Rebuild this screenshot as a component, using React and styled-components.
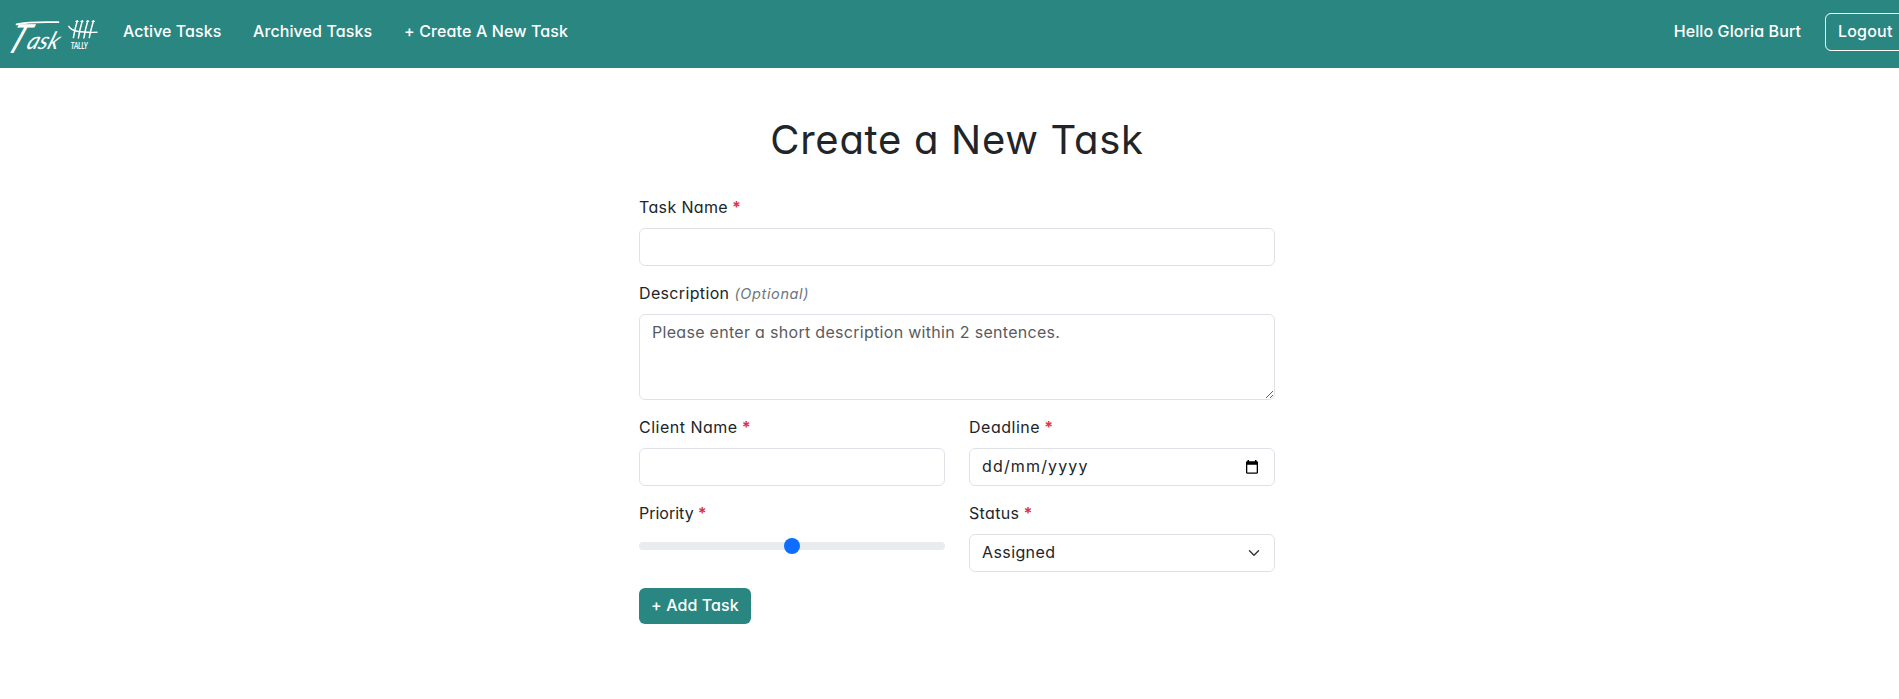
import React from 'react';
import styled, { createGlobalStyle } from 'styled-components';

const teal = '#2a8680';

const GlobalStyle = createGlobalStyle`
  *, *::before, *::after { box-sizing: border-box; }
  html, body { margin: 0; overflow: hidden; background: #fff; }
  body, input, textarea, select, button {
    font-family: Inter, "Open Sans", sans-serif;
    font-size: 16px;
    line-height: 24px;
    font-feature-settings: 'cv11' 1;
    color: #212529;
  }
`;

const Page = styled.div`
  width: 1914px;
  height: 699px;
`;

const Navbar = styled.nav`
  display: flex;
  align-items: flex-start;
  height: 68px;
  padding-right: 8px;
  background: ${teal};
`;

const Brand = styled.a`
  display: flex;
  width: 123px;
  svg { display: block; }
`;

const NavLinks = styled.div`
  display: flex;
  flex: 1;
  padding-top: 19px;
`;

const NavLink = styled.a`
  width: ${p => p.$width}px;
  color: #fff;
  font-weight: 500;
  letter-spacing: ${p => p.$track}px;
  white-space: nowrap;
`;

const Greeting = styled.span`
  padding-top: 19px;
  color: #fff;
  font-weight: 500;
  letter-spacing: 0.1px;
  margin-right: 24px;
`;

const LogoutButton = styled.button`
  width: 81px;
  height: 38px;
  margin-top: 13px;
  padding: 5px 12px 7px;
  border: 1px solid #fff;
  border-radius: 6px;
  background: transparent;
  color: #fff;
  font-weight: 500;
  letter-spacing: 0.2px;
  text-align: left;
`;

const Form = styled.form`
  width: 636px;
  margin: 0 auto;
  padding-top: 48px;
`;

const Title = styled.h1`
  margin: 0 0 32px;
  font-size: 40px;
  line-height: 48px;
  font-weight: 400;
  letter-spacing: 0.7px;
  text-align: center;
  white-space: nowrap;
`;

const Group = styled.div`
  display: flex;
  flex-direction: column;
  margin-bottom: 16px;
`;

const Columns = styled.div`
  display: grid;
  grid-template-columns: 1fr 1fr;
  column-gap: 24px;
`;

const Label = styled.label`
  display: flex;
  height: 24px;
  line-height: 22px;
  margin-bottom: 8px;
  letter-spacing: ${p => p.$track}px;
  white-space: nowrap;
`;

const Required = styled.span`
  margin-left: 4px;
  color: #dc3545;
  font-weight: 700;
  letter-spacing: 0;
`;

const Optional = styled.em`
  margin-left: 5px;
  color: #6c757d;
  font-size: 14.5px;
  line-height: 24px;
  letter-spacing: 0.62px;
`;

const Control = styled.div`
  display: flex;
  align-items: center;
  height: 38px;
  border: 1px solid #dee2e6;
  border-radius: 6px;
  background: #fff;
  padding-right: ${p => p.$pad || 0}px;
`;

const Input = styled.input`
  flex: 1;
  min-width: 0;
  height: 36px;
  padding: 5px 12px 7px;
  border: 0;
  outline: 0;
  background: transparent;
  letter-spacing: ${p => p.$track || 0}px;
`;

const Select = styled.select`
  flex: 1;
  height: 36px;
  padding: 5px 12px 7px;
  border: 0;
  outline: 0;
  appearance: none;
  background: transparent;
  letter-spacing: 0.4px;
`;

const Textarea = styled.textarea`
  display: block;
  width: 100%;
  height: 86px;
  padding: 5px 12px 7px;
  border: 1px solid #dee2e6;
  border-radius: 6px;
  outline: 0;
  resize: vertical;
  letter-spacing: 0.3px;
  &::placeholder { color: #595c5f; opacity: 1; }
`;

const Range = styled.input`
  display: block;
  width: 100%;
  height: 24px;
  margin: 0;
  padding: 0;
  appearance: none;
  background: transparent;
  &::-webkit-slider-runnable-track {
    height: 8px;
    border-radius: 16px;
    background: #e9ecef;
  }
  &::-webkit-slider-thumb {
    appearance: none;
    width: 16px;
    height: 16px;
    margin-top: -4px;
    border: 0;
    border-radius: 50%;
    background: #0d6efd;
  }
`;

const AddButton = styled.button`
  display: block;
  width: 112px;
  height: 36px;
  padding: 0 0 2px 12px;
  border: 0;
  border-radius: 6px;
  background: ${teal};
  color: #fff;
  font-weight: 500;
  letter-spacing: 0.1px;
  text-align: left;
  white-space: nowrap;
`;

function Logo() {
  return (
    <svg width="108" height="68" viewBox="0 0 108 68" fill="none" stroke="#fff" strokeLinecap="round">
      <g fill="#fff" stroke="none" fontFamily="Lato, sans-serif" fontStyle="italic">
        <text transform="translate(4 53) skewX(-24)" fontSize="40" fontWeight="400" textLength="18" lengthAdjust="spacingAndGlyphs">T</text>
        <text transform="translate(25.5 49) skewX(-20)" fontSize="24" fontWeight="400" textLength="31.5" lengthAdjust="spacingAndGlyphs">ask</text>
      </g>
      <path d="M16.5 24.3C24 22.6 42 21.8 58.5 22.2" strokeWidth="1.7" />
      <path d="M77.3 20.8C75.8 26 74.3 32 73.4 37.6M82.3 20.8C80.8 26 79.3 32 78.4 38M87.8 20.8C86.3 26 84.8 32 83.9 38M93.5 20.8C92 26 90.3 32 89.3 37.6" strokeWidth="1.5" />
      <path d="M76 21.4h2M81 21.4h2M86.6 21.4h2M92.2 21.4h2" strokeWidth="1.3" />
      <path d="M68.8 26.3C71.5 31.2 79 32.6 97 32.3" strokeWidth="1.4" />
      <text x="70.7" y="48.6" fill="#fff" stroke="none" fontFamily="Lato, sans-serif" fontStyle="italic" fontWeight="700" fontSize="8.6" textLength="17" lengthAdjust="spacingAndGlyphs">TALLY</text>
    </svg>
  );
}

function CalendarIcon() {
  return (
    <svg width="14" height="16" viewBox="0 0 14 16">
      <path d="M2.5 1h1.6v1.2h5.8V1h1.6v1.2h.3c.7 0 1.2.5 1.2 1.2v10.2c0 .7-.5 1.2-1.2 1.2H2.2c-.7 0-1.2-.5-1.2-1.2V3.4c0-.7.5-1.2 1.2-1.2h.3zM2.3 5.8v7.7h9.4V5.8z" fill="#000" fillRule="evenodd" />
    </svg>
  );
}

function ChevronIcon() {
  return (
    <svg width="16" height="12" viewBox="0 0 16 16">
      <path d="m2 5 6 6 6-6" fill="none" stroke="#343a40" strokeWidth="2" strokeLinecap="round" strokeLinejoin="round" />
    </svg>
  );
}

function Field({ label, track, children }) {
  return (
    <Group>
      <Label $track={track}>{label}<Required>*</Required></Label>
      {children}
    </Group>
  );
}

export default function App() {
  return (
    <Page>
      <GlobalStyle />
      <Navbar>
        <Brand><Logo /></Brand>
        <NavLinks>
          <NavLink $width={130} $track={0.05}>Active Tasks</NavLink>
          <NavLink $width={151} $track={0.1}>Archived Tasks</NavLink>
          <NavLink $width={170} $track={0.12}>+ Create A New Task</NavLink>
        </NavLinks>
        <Greeting>Hello Gloria Burt</Greeting>
        <LogoutButton>Logout</LogoutButton>
      </Navbar>
      <Form onSubmit={e => e.preventDefault()}>
        <Title>Create a New Task</Title>
        <Field label="Task Name" track={0.36}>
          <Control><Input type="text" /></Control>
        </Field>
        <Group>
          <Label $track={0.35}>Description<Optional>(Optional)</Optional></Label>
          <Textarea placeholder="Please enter a short description within 2 sentences." />
        </Group>
        <Columns>
          <Field label="Client Name" track={0.5}>
            <Control><Input type="text" /></Control>
          </Field>
          <Field label="Deadline" track={0.52}>
            <Control $pad={15}>
              <Input type="text" defaultValue="dd/mm/yyyy" $track={1.15} />
              <CalendarIcon />
            </Control>
          </Field>
          <Field label="Priority" track={0}>
            <Range type="range" min="1" max="3" defaultValue="2" />
          </Field>
          <Field label="Status" track={0.35}>
            <Control $pad={12}>
              <Select defaultValue="Assigned"><option>Assigned</option></Select>
              <ChevronIcon />
            </Control>
          </Field>
        </Columns>
        <AddButton>+ Add Task</AddButton>
      </Form>
    </Page>
  );
}
